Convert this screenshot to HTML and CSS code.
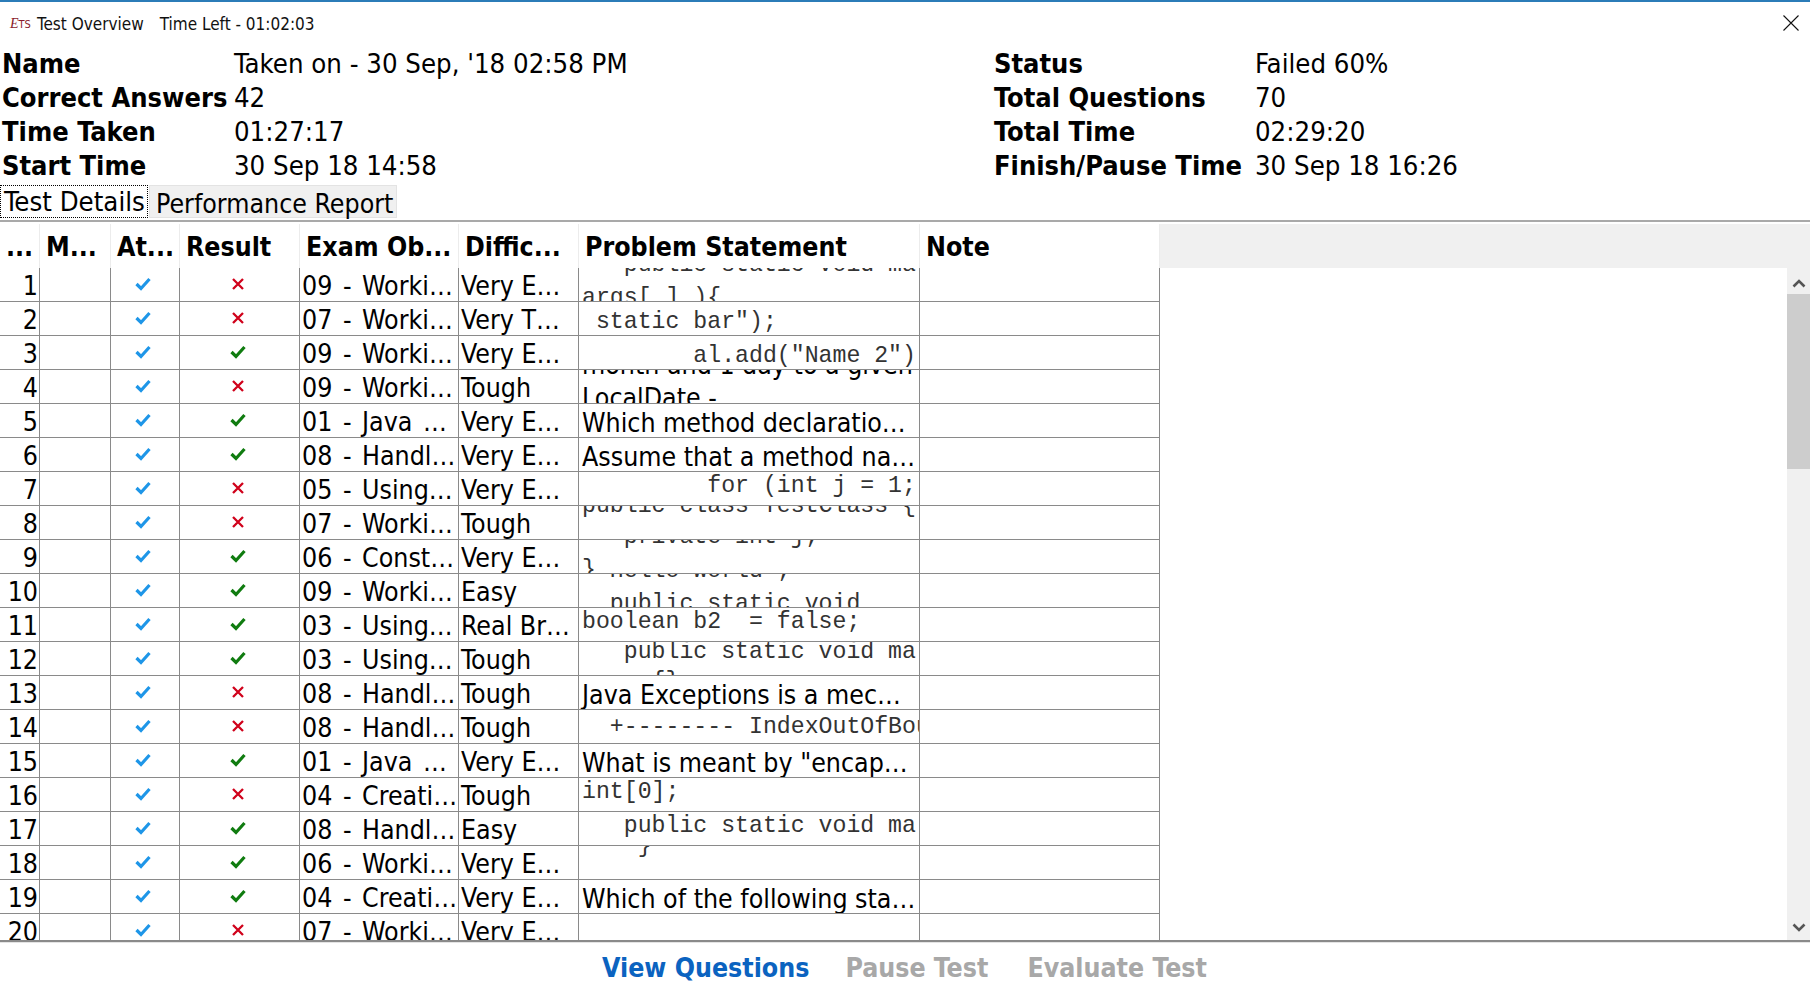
FILE: index.html
```html
<!DOCTYPE html>
<html lang="en">
<head>
    <meta charset="utf-8">
    <title>Test Overview</title>
    <link rel="stylesheet" href="styles.css">
</head>
<body>
    <svg class="defs" width="0" height="0">
        <symbol id="tick" viewBox="0 0 16 14"><path d="M1.5 7 L6 11.5 L14.5 2" fill="none" stroke="currentColor" stroke-width="3.2"/></symbol>
        <symbol id="cross" viewBox="0 0 12 12"><path d="M1 1 L11 11 M11 1 L1 11" fill="none" stroke="currentColor" stroke-width="2.3"/></symbol>
    </svg>

    <header class="titlebar">
        <span class="logo"><i>E</i>TS</span>
        <span class="title">Test Overview</span>
        <span class="title">Time Left - 01:02:03</span>
        <svg class="close" viewBox="0 0 16 16"><path d="M0.5 0.5 L15.5 15.5 M15.5 0.5 L0.5 15.5" stroke="#111" stroke-width="1.1"/></svg>
    </header>

    <section class="summary">
        <dl class="facts facts-left">
            <dt>Name</dt><dd>Taken on - 30 Sep, '18 02:58 PM</dd>
            <dt>Correct Answers</dt><dd>42</dd>
            <dt>Time Taken</dt><dd>01:27:17</dd>
            <dt>Start Time</dt><dd>30 Sep 18 14:58</dd>
        </dl>
        <dl class="facts facts-right">
            <dt>Status</dt><dd>Failed 60%</dd>
            <dt>Total Questions</dt><dd>70</dd>
            <dt>Total Time</dt><dd>02:29:20</dd>
            <dt>Finish/Pause Time</dt><dd>30 Sep 18 16:26</dd>
        </dl>
    </section>

    <nav class="tabs">
        <div class="tab tab-active">Test Details</div>
        <div class="tab">Performance Report</div>
    </nav>

    <main class="grid">
        <div class="grid-main">
            <div class="row head">
                <div class="cell">...</div>
                <div class="cell">M...</div>
                <div class="cell">At...</div>
                <div class="cell">Result</div>
                <div class="cell">Exam Ob...</div>
                <div class="cell">Diffic...</div>
                <div class="cell">Problem Statement</div>
                <div class="cell">Note</div>
            </div>
            <div class="rows">
                <div class="row">
                    <div class="cell num">1</div><div class="cell"></div>
                    <div class="cell mark"><svg class="tick-blue"><use href="#tick"/></svg></div>
                    <div class="cell mark"><svg class="cross-red"><use href="#cross"/></svg></div>
                    <div class="cell">09 - Worki…</div><div class="cell">Very E…</div>
                    <div class="cell prob two code lift-s"><span>   public static void ma</span><span>args[ ] ){</span></div><div class="cell"></div>
                </div>
                <div class="row">
                    <div class="cell num">2</div><div class="cell"></div>
                    <div class="cell mark"><svg class="tick-blue"><use href="#tick"/></svg></div>
                    <div class="cell mark"><svg class="cross-red"><use href="#cross"/></svg></div>
                    <div class="cell">07 - Worki…</div><div class="cell">Very T…</div>
                    <div class="cell prob code low"><span> static bar");</span></div><div class="cell"></div>
                </div>
                <div class="row">
                    <div class="cell num">3</div><div class="cell"></div>
                    <div class="cell mark"><svg class="tick-blue"><use href="#tick"/></svg></div>
                    <div class="cell mark"><svg class="tick-green"><use href="#tick"/></svg></div>
                    <div class="cell">09 - Worki…</div><div class="cell">Very E…</div>
                    <div class="cell prob code low"><span>        al.add("Name 2")</span></div><div class="cell"></div>
                </div>
                <div class="row">
                    <div class="cell num">4</div><div class="cell"></div>
                    <div class="cell mark"><svg class="tick-blue"><use href="#tick"/></svg></div>
                    <div class="cell mark"><svg class="cross-red"><use href="#cross"/></svg></div>
                    <div class="cell">09 - Worki…</div><div class="cell">Tough</div>
                    <div class="cell prob two lift"><span>month and 1 day to a given</span><span>LocalDate -</span></div><div class="cell"></div>
                </div>
                <div class="row">
                    <div class="cell num">5</div><div class="cell"></div>
                    <div class="cell mark"><svg class="tick-blue"><use href="#tick"/></svg></div>
                    <div class="cell mark"><svg class="tick-green"><use href="#tick"/></svg></div>
                    <div class="cell">01 - Java …</div><div class="cell">Very E…</div>
                    <div class="cell prob plain">Which method declaratio…</div><div class="cell"></div>
                </div>
                <div class="row">
                    <div class="cell num">6</div><div class="cell"></div>
                    <div class="cell mark"><svg class="tick-blue"><use href="#tick"/></svg></div>
                    <div class="cell mark"><svg class="tick-green"><use href="#tick"/></svg></div>
                    <div class="cell">08 - Handl…</div><div class="cell">Very E…</div>
                    <div class="cell prob plain">Assume that a method na…</div><div class="cell"></div>
                </div>
                <div class="row">
                    <div class="cell num">7</div><div class="cell"></div>
                    <div class="cell mark"><svg class="tick-blue"><use href="#tick"/></svg></div>
                    <div class="cell mark"><svg class="cross-red"><use href="#cross"/></svg></div>
                    <div class="cell">05 - Using…</div><div class="cell">Very E…</div>
                    <div class="cell prob code high"><span>         for (int j = 1;</span></div><div class="cell"></div>
                </div>
                <div class="row">
                    <div class="cell num">8</div><div class="cell"></div>
                    <div class="cell mark"><svg class="tick-blue"><use href="#tick"/></svg></div>
                    <div class="cell mark"><svg class="cross-red"><use href="#cross"/></svg></div>
                    <div class="cell">07 - Worki…</div><div class="cell">Tough</div>
                    <div class="cell prob two code"><span>public class TestClass {</span><span>&nbsp;</span></div><div class="cell"></div>
                </div>
                <div class="row">
                    <div class="cell num">9</div><div class="cell"></div>
                    <div class="cell mark"><svg class="tick-blue"><use href="#tick"/></svg></div>
                    <div class="cell mark"><svg class="tick-green"><use href="#tick"/></svg></div>
                    <div class="cell">06 - Const…</div><div class="cell">Very E…</div>
                    <div class="cell prob two code lift-s"><span>   private int j;</span><span>}</span></div><div class="cell"></div>
                </div>
                <div class="row">
                    <div class="cell num">10</div><div class="cell"></div>
                    <div class="cell mark"><svg class="tick-blue"><use href="#tick"/></svg></div>
                    <div class="cell mark"><svg class="tick-green"><use href="#tick"/></svg></div>
                    <div class="cell">09 - Worki…</div><div class="cell">Easy</div>
                    <div class="cell prob two code lift-s"><span> "Hello World";</span><span>  public static void</span></div><div class="cell"></div>
                </div>
                <div class="row">
                    <div class="cell num">11</div><div class="cell"></div>
                    <div class="cell mark"><svg class="tick-blue"><use href="#tick"/></svg></div>
                    <div class="cell mark"><svg class="tick-green"><use href="#tick"/></svg></div>
                    <div class="cell">03 - Using…</div><div class="cell">Real Br…</div>
                    <div class="cell prob code high"><span>boolean b2  = false;</span></div><div class="cell"></div>
                </div>
                <div class="row">
                    <div class="cell num">12</div><div class="cell"></div>
                    <div class="cell mark"><svg class="tick-blue"><use href="#tick"/></svg></div>
                    <div class="cell mark"><svg class="tick-green"><use href="#tick"/></svg></div>
                    <div class="cell">03 - Using…</div><div class="cell">Tough</div>
                    <div class="cell prob code code-top code-tight"><span>   public static void ma</span><span>     {};</span></div><div class="cell"></div>
                </div>
                <div class="row">
                    <div class="cell num">13</div><div class="cell"></div>
                    <div class="cell mark"><svg class="tick-blue"><use href="#tick"/></svg></div>
                    <div class="cell mark"><svg class="cross-red"><use href="#cross"/></svg></div>
                    <div class="cell">08 - Handl…</div><div class="cell">Tough</div>
                    <div class="cell prob plain">Java Exceptions is a mec…</div><div class="cell"></div>
                </div>
                <div class="row">
                    <div class="cell num">14</div><div class="cell"></div>
                    <div class="cell mark"><svg class="tick-blue"><use href="#tick"/></svg></div>
                    <div class="cell mark"><svg class="cross-red"><use href="#cross"/></svg></div>
                    <div class="cell">08 - Handl…</div><div class="cell">Tough</div>
                    <div class="cell prob code low-s"><span>  +-------- IndexOutOfBounds</span></div><div class="cell"></div>
                </div>
                <div class="row">
                    <div class="cell num">15</div><div class="cell"></div>
                    <div class="cell mark"><svg class="tick-blue"><use href="#tick"/></svg></div>
                    <div class="cell mark"><svg class="tick-green"><use href="#tick"/></svg></div>
                    <div class="cell">01 - Java …</div><div class="cell">Very E…</div>
                    <div class="cell prob plain">What is meant by "encap…</div><div class="cell"></div>
                </div>
                <div class="row">
                    <div class="cell num">16</div><div class="cell"></div>
                    <div class="cell mark"><svg class="tick-blue"><use href="#tick"/></svg></div>
                    <div class="cell mark"><svg class="cross-red"><use href="#cross"/></svg></div>
                    <div class="cell">04 - Creati…</div><div class="cell">Tough</div>
                    <div class="cell prob code high"><span>int[0];</span></div><div class="cell"></div>
                </div>
                <div class="row">
                    <div class="cell num">17</div><div class="cell"></div>
                    <div class="cell mark"><svg class="tick-blue"><use href="#tick"/></svg></div>
                    <div class="cell mark"><svg class="tick-green"><use href="#tick"/></svg></div>
                    <div class="cell">08 - Handl…</div><div class="cell">Easy</div>
                    <div class="cell prob code code-top"><span>   public static void ma</span></div><div class="cell"></div>
                </div>
                <div class="row">
                    <div class="cell num">18</div><div class="cell"></div>
                    <div class="cell mark"><svg class="tick-blue"><use href="#tick"/></svg></div>
                    <div class="cell mark"><svg class="tick-green"><use href="#tick"/></svg></div>
                    <div class="cell">06 - Worki…</div><div class="cell">Very E…</div>
                    <div class="cell prob two code"><span>    }</span><span>&nbsp;</span></div><div class="cell"></div>
                </div>
                <div class="row">
                    <div class="cell num">19</div><div class="cell"></div>
                    <div class="cell mark"><svg class="tick-blue"><use href="#tick"/></svg></div>
                    <div class="cell mark"><svg class="tick-green"><use href="#tick"/></svg></div>
                    <div class="cell">04 - Creati…</div><div class="cell">Very E…</div>
                    <div class="cell prob plain">Which of the following sta…</div><div class="cell"></div>
                </div>
                <div class="row">
                    <div class="cell num">20</div><div class="cell"></div>
                    <div class="cell mark"><svg class="tick-blue"><use href="#tick"/></svg></div>
                    <div class="cell mark"><svg class="cross-red"><use href="#cross"/></svg></div>
                    <div class="cell">07 - Worki…</div><div class="cell">Very E…</div>
                    <div class="cell prob"></div><div class="cell"></div>
                </div>
            </div>
        </div>
        <div class="scrollbar">
            <svg class="arrow" viewBox="0 0 14 9"><path d="M1.5 7.5 L7 2 L12.5 7.5" fill="none" stroke="#555" stroke-width="2.6"/></svg>
            <div class="thumb"></div>
            <svg class="arrow arrow-down" viewBox="0 0 14 9"><path d="M1.5 1.5 L7 7 L12.5 1.5" fill="none" stroke="#555" stroke-width="2.6"/></svg>
        </div>
    </main>

    <footer class="actions">
        <a class="action action-on">View Questions</a>
        <a class="action">Pause Test</a>
        <a class="action">Evaluate Test</a>
    </footer>
</body>
</html>
```

FILE: styles.css
```css
* { box-sizing: border-box; }
html, body { margin: 0; height: 100%; }
body {
    width: 1810px;
    height: 989px;
    overflow: hidden;
    background: #fff;
    color: #000;
    font-family: "DejaVu Sans", "Noto Sans", sans-serif;
    font-stretch: condensed;
    font-size: 26.5px;
    border-top: 2px solid #2b7cb8;
    display: flex;
    flex-direction: column;
}
.defs { display: block; height: 0; }

.titlebar {
    height: 44px;
    display: flex;
    align-items: center;
    padding-left: 10px;
    font-size: 17px;
    color: #111;
}
.logo {
    width: 27px;
    font-size: 11px;
    color: #8a1c2c;
}
.logo i { font-family: "Liberation Serif", serif; font-size: 14px; }
.title { margin-right: 16px; }
.close {
    width: 16px;
    height: 16px;
    margin-left: auto;
    margin-right: 11px;
    margin-bottom: 3px;
}

.summary {
    display: flex;
    height: 139px;
    padding-left: 2px;
    font-size: 27.3px;
}
.facts {
    margin: 0;
    display: grid;
    grid-auto-rows: 34px;
    align-items: center;
}
.facts dt { font-weight: bold; font-size: 27px; }
.facts dd { margin: 0; }
.facts-left { width: 992px; grid-template-columns: 232px 1fr; }
.facts-right { grid-template-columns: 261px 1fr; }

.tabs {
    display: flex;
    height: 37px;
    border-bottom: 2px solid #a9a9a9;
    align-items: flex-start;
}
.tab {
    height: 33px;
    width: 248px;
    margin-left: 1px;
    padding: 2px 3px 0 6px;
    background: #f0f0f0;
    border: 1px solid #e3e3e3;
    white-space: nowrap;
    line-height: 32px;
}
.tab-active {
    width: 148px;
    margin-left: 0;
    padding: 0 3px;
    background: #fff;
    border: 1px dotted #000;
    font-size: 27.3px;
}

.grid {
    flex: 1;
    display: flex;
    min-height: 0;
    margin-top: 2px;
    border-bottom: 2px solid #8a8a8a;
    background: linear-gradient(#f0f0f0 44px, #fff 44px);
}
.grid-main {
    flex: 1;
    min-width: 0;
    display: flex;
    flex-direction: column;
    overflow: hidden;
}
.row {
    display: grid;
    grid-template-columns: 40px 71px 69px 120px 159px 120px 341px 240px;
    width: 1160px;
    height: 34px;
    border-bottom: 1px solid #8a8a8a;
    flex: none;
}
.cell {
    border-right: 1px solid #8a8a8a;
    padding-left: 2px;
    overflow: hidden;
    white-space: nowrap;
    line-height: 35px;
}
.rows .cell:nth-child(5) { word-spacing: 3px; }
.head {
    height: 44px;
    background: #fff;
    border-bottom: 0;
    font-weight: bold;
}
.head .cell {
    padding-left: 6px;
    line-height: 46px;
    border-right: 1px solid #ececec;
}
.rows { flex: 1; overflow: hidden; }
.num { text-align: right; padding-right: 1px; }
.mark {
    display: flex;
    align-items: center;
    justify-content: center;
    padding: 0 4px 2px 0;
}
.mark svg { display: block; }
.tick-blue { width: 16px; height: 14px; color: #1e96e8; }
.tick-green { width: 16px; height: 14px; color: #107c10; }
.cross-red { width: 12px; height: 12px; color: #d0021b; }

.prob {
    display: flex;
    flex-direction: column;
    justify-content: center;
    padding-left: 3px;
}
.prob span { flex: none; white-space: pre; line-height: 29px; }
.prob.plain { padding-top: 3px; }
.code {
    font-family: "Liberation Mono", monospace;
    font-stretch: normal;
    font-size: 23.2px;
    color: #333;
}
.prob.two span { line-height: 33px; }
.lift { padding-bottom: 12px; }
.lift-s { padding-bottom: 6px; }
.low { padding-top: 7px; }
.low-s { padding-top: 2px; }
.high { padding-bottom: 4px; }
.prob.code-top { justify-content: flex-start; padding-top: 2px; }
.prob.code-top span { line-height: 25px; }
.code-tight span:first-child { margin-top: -4px; }
.code-tight span:last-child { margin-top: 5px; }

.scrollbar {
    width: 23px;
    flex: none;
    background: #f0f0f0;
    display: flex;
    flex-direction: column;
    align-items: center;
    padding-top: 55px;
}
.arrow { width: 14px; height: 9px; flex: none; }
.arrow-down { margin-top: auto; margin-bottom: 8px; }
.thumb {
    width: 100%;
    height: 175px;
    margin-top: 6px;
    background: #cdcdcd;
}

.actions {
    height: 47px;
    display: flex;
    align-items: center;
    padding-left: 602px;
    padding-top: 2px;
    gap: 36px;
    font-weight: bold;
    color: #a8a8a8;
    border-top: 1px solid #e4e4e4;
}
.action:last-child { margin-left: 3px; }
.action-on { color: #0b63c0; }
```
